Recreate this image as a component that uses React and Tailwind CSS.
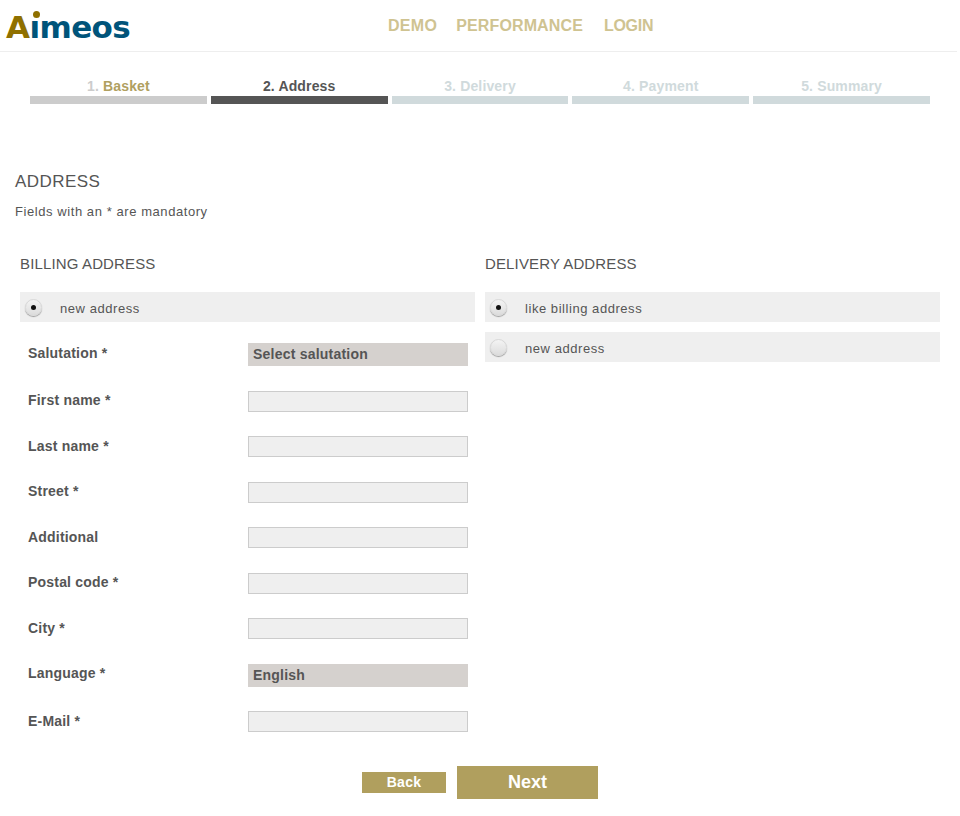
import React from "react";

const steps = [
  { n: "1.", t: "Basket", bar: "bg-[#cccccc]", nc: "text-[#cccccc]", tc: "text-[#b0a060]" },
  { n: "2.", t: "Address", bar: "bg-[#555555]", nc: "text-[#555555]", tc: "text-[#555555]" },
  { n: "3.", t: "Delivery", bar: "bg-[#d0dadc]", nc: "text-[#d0dadc]", tc: "text-[#d0dadc]" },
  { n: "4.", t: "Payment", bar: "bg-[#d0dadc]", nc: "text-[#d0dadc]", tc: "text-[#d0dadc]" },
  { n: "5.", t: "Summary", bar: "bg-[#d0dadc]", nc: "text-[#d0dadc]", tc: "text-[#d0dadc]" },
];

const fields = [
  { l: "Salutation *", s: "Select salutation", mt: "mt-0", lb: "pb-[4px]" },
  { l: "First name *", mt: "mt-[25px]", lb: "pb-[4px]" },
  { l: "Last name *", mt: "mt-[24px]", lb: "pb-[2px]" },
  { l: "Street *", mt: "mt-[25px]", lb: "pb-[4px]" },
  { l: "Additional", mt: "mt-[24px]", lb: "pb-[2px]" },
  { l: "Postal code *", mt: "mt-[25px]", lb: "pb-[4px]" },
  { l: "City *", mt: "mt-[24px]", lb: "pb-[2px]" },
  { l: "Language *", s: "English", mt: "mt-[25px]", lb: "pb-[6px]" },
  { l: "E-Mail *", mt: "mt-[24px]", lb: "pb-[2px]" },
];

function Radio({ on }) {
  return (
    <span className="flex h-[17px] w-[17px] shrink-0 items-center justify-center rounded-full border border-[#d8d8d8] bg-gradient-to-b from-[#f4f4f4] to-[#dcdcdc] shadow-[0_1px_1px_rgba(0,0,0,0.35)]">
      {on && <span className="h-[5px] w-[5px] rounded-full bg-[#111111]" />}
    </span>
  );
}

function Option({ on, label, cls = "" }) {
  return (
    <div className={`flex h-[30px] items-center bg-[#efefef] pl-[5px] text-[13px] tracking-[0.55px] text-[#555555] ${cls}`}>
      <Radio on={on} />
      <span className="ml-[18px] pt-[3px]">{label}</span>
    </div>
  );
}

export default function App() {
  return (
    <div className="h-[816px] w-[960px] overflow-hidden bg-white font-['Liberation_Sans',Arial,sans-serif]">
      <header className="flex h-[52px] w-[957px] items-center border-b border-[#eeeeee]">
        <div className="relative ml-[6px] w-[372px] pt-[3px] text-[31px] font-bold leading-none tracking-[-0.6px] text-[#00547a] font-['DejaVu_Sans',sans-serif]">
          <span className="text-[#8f7000]">A</span>ımeos
          <span className="absolute left-[27px] top-[2px] h-[7px] w-[7px] rounded-full bg-[#8f7000]" />
        </div>
        <nav className="ml-[10px] flex gap-[19px] text-[16px] font-bold text-[#cfc391]">
          <span className="tracking-[0.3px]">DEMO</span>
          <span className="tracking-[0.13px]">PERFORMANCE</span>
          <span className="ml-[2px] tracking-[-0.3px]">LOGIN</span>
        </nav>
      </header>

      <ol className="ml-[30px] mt-[26px] flex w-[900px] gap-[4px]">
        {steps.map((s) => (
          <li key={s.t} className="flex-1 text-center">
            <div className="h-[18px] text-[14px] font-bold leading-[16px] tracking-[0.15px]">
              <span className={s.nc}>{s.n} </span>
              <span className={s.tc}>{s.t}</span>
            </div>
            <div className={`h-[8px] ${s.bar}`} />
          </li>
        ))}
      </ol>

      <h1 className="ml-[15px] mt-[68px] text-[17px] leading-[20px] tracking-[0.45px] text-[#555555]">ADDRESS</h1>
      <p className="ml-[15px] mt-[11px] text-[13px] leading-[18px] tracking-[0.57px] text-[#555555]">Fields with an * are mandatory</p>

      <div className="ml-[20px] mt-[33px] flex w-[920px] gap-[10px]">
        <section className="w-[455px]">
          <h2 className="h-[19px] text-[15px] leading-[20px] tracking-[0.14px] text-[#555555]">BILLING ADDRESS</h2>
          <Option on label="new address" cls="mt-[19px]" />
          <div className="mt-[21px] pl-[8px]">
            {fields.map((f) => (
              <div key={f.l} className={`flex items-center ${f.mt}`}>
                <label className={`w-[220px] text-[14px] font-bold leading-[16px] tracking-[0.2px] text-[#555555] ${f.lb}`}>{f.l}</label>
                {f.s ? (
                  <div className="h-[23px] w-[220px] bg-[#d5d1ce] pl-[5px] text-[14px] font-bold leading-[22px] tracking-[0.22px] text-[#555555]">{f.s}</div>
                ) : (
                  <div className="h-[21px] w-[220px] border border-[#cccccc] bg-[#efefef]" />
                )}
              </div>
            ))}
          </div>
        </section>
        <section className="w-[455px]">
          <h2 className="h-[19px] text-[15px] leading-[20px] tracking-[0.14px] text-[#555555]">DELIVERY ADDRESS</h2>
          <Option on label="like billing address" cls="mt-[19px]" />
          <Option label="new address" cls="mt-[10px]" />
        </section>
      </div>

      <div className="ml-[362px] mt-[34px] flex items-center gap-[11px] font-bold text-white">
        <button className="h-[21px] w-[84px] bg-[#b09f5e] text-[14px] tracking-[0.3px]">Back</button>
        <button className="h-[33px] w-[141px] bg-[#b09f5e] text-[18px]">Next</button>
      </div>
    </div>
  );
}
